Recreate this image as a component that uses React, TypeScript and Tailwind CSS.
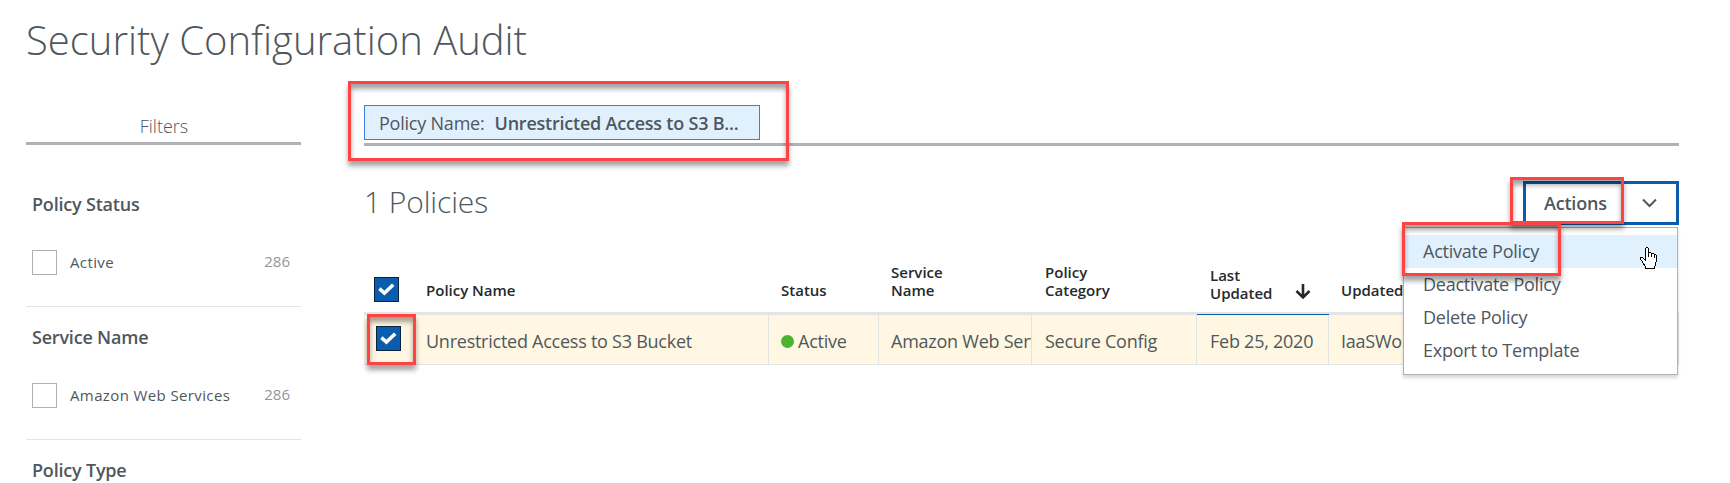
import React from "react";

function Callout({ className }: { className: string }) {
  return (
    <div
      className={`pointer-events-none absolute border-3 border-[#ff4242] shadow-[0_5px_5px_rgba(0,0,0,0.36),inset_0_5px_5px_rgba(0,0,0,0.36)] ${className}`}
    />
  );
}

function Checked({ className = "" }: { className?: string }) {
  return (
    <span className={`flex size-[25px] shrink-0 items-center justify-center border border-[#08233f] bg-[#0a5cad] ${className}`}>
      <svg width="23" height="23" viewBox="0 0 23 23" fill="none" stroke="#fff" strokeWidth="3.6">
        <path d="M4.4 10.6 L9.4 15 L18.2 6.8" />
      </svg>
    </span>
  );
}

function Filter({ title, label, count }: { title: string; label?: string; count?: number }) {
  return (
    <section className="h-[133px] border-b border-[#e3e4e5]">
      <h3 className="pt-[18px] pl-[6px] text-[18px] leading-6 font-semibold tracking-[-0.2px]">{title}</h3>
      {label && (
        <div className="mt-[34px] flex h-[25px] items-center pr-[11px] pl-[6px]">
          <span className="size-[25px] border border-[#adb2b7]" />
          <span className="-mt-[2px] ml-[13px] text-[15px] leading-6 tracking-[0.38px]">{label}</span>
          <span className="-mt-[3px] ml-auto text-[15px] leading-6 text-[#8f969c]">{count}</span>
        </div>
      )}
    </section>
  );
}

const cell = "border-r border-[#e0e3e6] overflow-hidden whitespace-nowrap pl-[12px] pt-[3px] flex items-center";

export default function App() {
  return (
    <div className="relative h-[483px] w-[1730px] overflow-hidden bg-white px-[26px] font-['Open_Sans',sans-serif] text-[#4f575e]">
      <h1 className="h-[105px] pt-[12px] text-[40px] leading-[56px] font-light whitespace-nowrap">
        Security Configuration Audit
      </h1>
      <div className="flex">
        <aside className="w-[275px] shrink-0">
          <div className="h-[40px] border-b-3 border-[#adb2b6] pt-[9px] pl-[1px] text-center text-[18px] leading-[24px] font-light">
            Filters
          </div>
          <div className="mt-[29px]">
            <Filter title="Policy Status" label="Active" count={286} />
            <Filter title="Service Name" label="Amazon Web Services" count={286} />
            <Filter title="Policy Type" />
          </div>
        </aside>

        <main className="ml-[63px] w-[1315px] shrink-0">
          <div className="relative h-[41px] border-b-3 border-[#adb2b6]">
            <div className="flex h-[35px] w-[396px] items-center border border-[#3b7fe6] bg-[#e1f0fd] pt-[1px] pl-[14px] text-[18px] tracking-[-0.22px] whitespace-nowrap">
              <span>Policy Name:</span>
              <span className="ml-[10px] font-semibold">Unrestricted Access to S3 B...</span>
            </div>
            <Callout className="-top-[24px] -left-[16px] h-[80px] w-[441px]" />
          </div>

          <div className="flex h-[79px] justify-between pt-[35px]">
            <h2 className="pt-[1px] text-[30px] leading-[40px] font-light tracking-[-0.1px] whitespace-nowrap">1 Policies</h2>
            <div className="relative h-[44px] w-[156px]">
              <button className="flex h-[44px] w-[156px] items-center border-3 border-[#0a5cad] bg-white pl-[18px] text-[18px] font-semibold tracking-[-0.2px]">
                Actions
                <svg className="ml-[34px]" width="17" height="12" viewBox="0 0 17 12" fill="none" stroke="#4f575e" strokeWidth="2">
                  <path d="M2 2.5 L8.5 9 L15 2.5" />
                </svg>
              </button>
              <ul className="absolute top-[46px] right-[1px] z-10 w-[275px] border border-[#adb2b7] bg-white py-[7px] text-[18px] leading-[33px] tracking-[-0.23px] whitespace-nowrap shadow-[0_3px_3px_rgba(0,0,0,0.15)]">
                <li className="bg-[#e1f0fd] pl-[19px]">Activate Policy</li>
                <li className="pl-[19px]">Deactivate Policy</li>
                <li className="pl-[19px]">Delete Policy</li>
                <li className="pl-[19px]">Export to Template</li>
              </ul>
              <Callout className="-top-[4px] -left-[13px] z-20 h-[47px] w-[114px]" />
              <Callout className="top-[41px] -left-[121px] z-20 h-[54px] w-[159px]" />
              <svg className="absolute top-[66px] left-[117px] z-20" width="17" height="22" viewBox="0 0 17 22" shapeRendering="crispEdges">
                <path
                  d="M5.5 13.5 V1.5 L6.5 .5 H7.5 L8.5 1.5 V5.5 H10.5 L11.5 6.5 H13.5 L14.5 7.5 H15.5 L16.5 8.5 V14.5 L15.5 15.5 V18.5 L14.5 19.5 V21.5 H5.5 V19.5 L2.5 15.5 V14.5 L.5 12.5 V10.5 H2.5 Z"
                  fill="#fff"
                  stroke="#000"
                />
                <path d="M8.5 5 V10 M11.5 6 V10 M14.5 8 V11" stroke="#000" />
              </svg>
            </div>
          </div>

          <div className="relative mt-[28px]">
            <div className="grid h-[62px] grid-cols-[50px_355px_110px_153px_165px_132px_350px] items-end border-b-3 border-[#e3e4e5] pb-[10px] text-[15px] leading-[18px] font-semibold text-[#26292c]">
              <Checked className="ml-[10px]" />
              <div className="pb-[3px] pl-[12px]">Policy Name</div>
              <div className="pb-[3px] pl-[12px]">Status</div>
              <div className="pb-[3px] pl-[12px]">Service<br />Name</div>
              <div className="pb-[3px] pl-[13px]">Policy<br />Category</div>
              <div className="flex items-end justify-between pr-[18px] pl-[13px]">
                <span>Last<br />Updated</span>
                <svg className="mb-[2px]" width="16" height="16" viewBox="0 0 16 16" fill="none" stroke="#26292c" strokeWidth="2.6">
                  <path d="M8 0 V13 M1.5 7 L8 13.5 L14.5 7" />
                </svg>
              </div>
              <div className="pb-[3px] pl-[12px]">Updated By</div>
            </div>
            <div className="grid h-[50px] w-[1315px] grid-cols-[50px_355px_110px_153px_165px_132px_350px] border-b border-[#e0e3e6] bg-[#fff7e2] text-[18px] tracking-[-0.25px]">
              <div className="pt-[11px] pl-[12px]"><Checked /></div>
              <div className={cell}>Unrestricted Access to S3 Bucket</div>
              <div className={cell}>
                <span className="mr-[4px] size-[13px] shrink-0 rounded-full bg-[#4cb233]" />
                Active
              </div>
              <div className={cell}>Amazon Web Services</div>
              <div className={cell}><span className="ml-px">Secure Config</span></div>
              <div className={cell}><span className="ml-px">Feb 25, 2020</span></div>
              <div className={cell}>IaaSWorkflow</div>
            </div>
            <div className="absolute top-[61px] left-[833px] h-px w-[132px] bg-[#0a5cad]" />
            <Callout className="top-[61px] left-[3px] h-[51px] w-[49px]" />
          </div>
        </main>
      </div>
    </div>
  );
}
